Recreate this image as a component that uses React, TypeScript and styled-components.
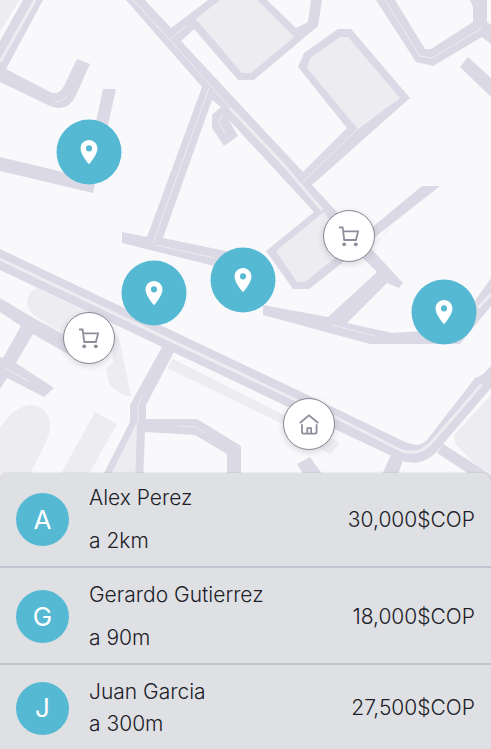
import React from "react";
import styled, { createGlobalStyle } from "styled-components";

const MAP_WIDTH = 491;
const MAP_HEIGHT = 481;

const GlobalStyle = createGlobalStyle`
  *, *::before, *::after { box-sizing: border-box; }
  body {
    margin: 0;
    background: #dfe0e4;
    color: #202127;
    font-family: Inter, "Liberation Sans", sans-serif;
  }
`;

const Page = styled.main`
  display: flex;
  flex-direction: column;
  min-height: 100vh;
`;

const MapArea = styled.section`
  position: relative;
  width: 100%;
  aspect-ratio: ${MAP_WIDTH} / ${MAP_HEIGHT};
  overflow: hidden;
  background: #f9f9fb;
`;

const MapDrawing = styled.svg`
  display: block;
  width: 100%;
  height: 100%;
`;

const Marker = styled.button<{ $x: number; $y: number }>`
  position: absolute;
  left: ${({ $x }) => ($x / MAP_WIDTH) * 100}%;
  top: ${({ $y }) => ($y / MAP_HEIGHT) * 100}%;
  transform: translate(-50%, -50%);
  display: flex;
  align-items: center;
  justify-content: center;
  padding: 0;
  border-radius: 50%;
  cursor: pointer;
`;

const PersonMarker = styled(Marker)`
  width: 65px;
  height: 65px;
  border: 0;
  background: #55b9d4;
  color: #fff;
`;

const PlaceMarker = styled(Marker)`
  width: 52px;
  height: 52px;
  border: 1px solid #858793;
  background: #fff;
  color: #8d8e9b;
  box-shadow: 0 2px 6px rgba(40, 40, 60, 0.16);
`;

const Sheet = styled.ul`
  position: relative;
  flex: 1;
  margin: -8px 0 0;
  padding: 0;
  list-style: none;
  border-radius: 8px 8px 0 0;
  background: #dfe0e4;
  box-shadow: 0 0 2px rgba(60, 60, 80, 0.25);
`;

const Row = styled.li`
  display: flex;
  align-items: center;
  gap: 20px;
  padding: 11px 16px 9px;
  border-bottom: 2px solid #c1c4ce;

  &:first-child { padding-top: 9px; }
  &:last-child { border-bottom: 0; }
`;

const Avatar = styled.span`
  display: flex;
  flex: none;
  align-items: center;
  justify-content: center;
  width: 53px;
  height: 53px;
  border-radius: 50%;
  background: #55b9d4;
  color: #fff;
  font-size: 26px;
  line-height: 32px;
`;

const Details = styled.div<{ $compact?: boolean }>`
  display: flex;
  flex: 1;
  flex-direction: column;
  gap: ${({ $compact }) => ($compact ? 0 : 11)}px;
  min-width: 0;
`;

const Label = styled.span`
  font-size: 21px;
  font-weight: 300;
  line-height: 32px;
`;

const people = [
  { name: "Alex Perez", distance: "a 2km", price: "30,000$COP" },
  { name: "Gerardo Gutierrez", distance: "a 90m", price: "18,000$COP" },
  { name: "Juan Garcia", distance: "a 300m", price: "27,500$COP", compact: true },
];

const pins = [
  { x: 89, y: 152 },
  { x: 154, y: 293 },
  { x: 243, y: 280 },
  { x: 444, y: 312 },
];

const blocks = [
  "M0 0H20L0 31Z",
  "M220 0L196 19L242 73H251L294 37L257 0Z",
  "M340 37H348L400 98L357 130V128L307 68L310 58Z",
  "M324 212L276 251L297 282H305L330 263L360 240Z",
  "M37 288Q27 293 27 303Q28 312 38 318L72 338L100 318Z",
  "M112 330L119 338L131 396H125L110 386L106 368L113 363Z",
  "M0 428Q15 405 32 405Q50 407 50 428Q49 440 30 473V481H0Z",
  "M95 412L117 424L85 481H57Z",
  "M173 359L340 443L330 455L320 448L285 425L167 368Z",
  "M491 395L454 435L455 443L491 481Z",
  "M137 422L135 481H108Z",
];

const roads = [
  "M23 0H43L6 69L50 92Q59 96 64 86L77 59L90 64L76 95Q68 113 50 106L0 82V41Z",
  "M103 89H116L95 184L93 193L0 171V157L84 177Z",
  "M126 0H145L171 28L208 0H220L196 19L242 73H251L294 37L257 0H267L296 28L308 22L311 0H322L318 26L254 80H238L194 29L181 41L303 172L347 128L298 67L304 53L338 29H351L410 98L312 185L338 213L403 283L399 288L387 283L347 323L392 333L455 329L491 278V306L460 344H370L263 315V305L328 317L377 272L345 240L324 212L276 251L297 282H305L340 254L422 186H440L309 289H293L266 251L314 212L228 119L238 136L224 146L212 128V115L221 107L212 100L163 238L245 255L242 273L122 243V232L147 237L202 87Z",
  "M376 0L416 62L433 66L482 37L491 44V25L487 22V0H470L473 7V22L431 49H425L395 0Z",
  "M468 57L460 67L491 97V78Z",
  "M0 249L310 396L403 441Q419 449 427 440L475 378L482 375L491 366V388L443 444Q425 470 400 460L0 270Z",
  "M0 298L37 320L90 348L83 363L33 334L16 363L54 388L44 397L7 378L0 389V357L3 358L21 326L0 312Z",
  "M162 347L130 405V422L100 481H108L137 422L135 481H143L145 432L195 435L227 454V481H241V446L197 419H146V405L175 350Z",
  "M297 464L310 457L327 481H308Z",
  "M391 455L379 481H396L403 460Z",
  "M443 444L473 463L491 476V481H480L437 453Z",
];

const openings = ["M340 37H348L400 98L357 130V128L307 68L310 58Z"];

const wideStripes = [
  "M35 0L0 62",
  "M230 108L282 163L322 210",
  "M0 259L300 402L337 418L402 451Q420 456 432 442L482 384",
  "M491 294L478 308",
];

const thinStripes = [
  "M133 0L181 52L230 108",
  "M171 38L187 26",
  "M209 88L153 243",
  "M155 245L215 258",
  "M223 114L219 121L225 134",
  "M302 183L357 129",
  "M385 0L420 56L432 58L482 28",
  "M332 325L375 336",
  "M5 368L30 382",
  "M46 324L68 337",
  "M138 404V422",
  "M142 395L138 405",
  "M178 426L196 427L205 433",
  "M378 242L389 228",
  "M54 101Q62 103 67 96",
];

function StreetMap() {
  return (
    <MapDrawing viewBox={`0 0 ${MAP_WIDTH} ${MAP_HEIGHT}`} aria-hidden="true">
      <g fill="#edecf1">
        {blocks.map((d) => <path key={d} d={d} />)}
      </g>
      <g fill="#dbd9e5">
        {roads.map((d) => <path key={d} d={d} />)}
      </g>
      <g fill="#edecf1">
        {openings.map((d) => <path key={d} d={d} />)}
      </g>
      <g fill="none" stroke="#edecf1" strokeLinejoin="round">
        <g strokeWidth="3">{wideStripes.map((d) => <path key={d} d={d} />)}</g>
        <g strokeWidth="1">{thinStripes.map((d) => <path key={d} d={d} />)}</g>
      </g>
    </MapDrawing>
  );
}

function PinIcon() {
  return (
    <svg width="29" height="29" viewBox="0 0 24 24" fill="currentColor" aria-hidden="true">
      <path d="M12 2C8.13 2 5 5.13 5 9c0 5.25 7 13 7 13s7-7.75 7-13c0-3.87-3.13-7-7-7zm0 9.5a2.5 2.5 0 0 1 0-5 2.5 2.5 0 0 1 0 5z" />
    </svg>
  );
}

function CartIcon() {
  return (
    <svg width="24" height="24" viewBox="-12 -12 24 24" fill="none" stroke="currentColor" strokeWidth="1.8" aria-hidden="true">
      <path d="M-10 -8.5H-6.4L-4.7 4H6.9L9.1 -4.6H-5.8" />
      <circle cx="-4.8" cy="8.3" r="1.9" fill="currentColor" stroke="none" />
      <circle cx="6.8" cy="8.3" r="1.9" fill="currentColor" stroke="none" />
    </svg>
  );
}

function HouseIcon() {
  return (
    <svg width="24" height="24" viewBox="-12 -12 24 24" fill="none" stroke="currentColor" strokeWidth="1.8" aria-hidden="true">
      <path d="M-9.2 -1L0 -8.7L9.2 -1" />
      <path d="M-7 0.3V8Q-7 9.6 -5.4 9.6H6Q7.6 9.6 7.6 8V0.3" />
      <path d="M-1.7 9.6V4.2H2.1V9.6" />
    </svg>
  );
}

export default function App() {
  return (
    <Page>
      <GlobalStyle />
      <MapArea>
        <StreetMap />
        {pins.map(({ x, y }) => (
          <PersonMarker key={x} type="button" $x={x} $y={y} aria-label="Persona">
            <PinIcon />
          </PersonMarker>
        ))}
        <PlaceMarker type="button" $x={349} $y={236} aria-label="Tienda"><CartIcon /></PlaceMarker>
        <PlaceMarker type="button" $x={89} $y={338} aria-label="Tienda"><CartIcon /></PlaceMarker>
        <PlaceMarker type="button" $x={309} $y={424} aria-label="Casa"><HouseIcon /></PlaceMarker>
      </MapArea>
      <Sheet>
        {people.map(({ name, distance, price, compact }) => (
          <Row key={name}>
            <Avatar aria-hidden="true">{name[0]}</Avatar>
            <Details $compact={compact}>
              <Label>{name}</Label>
              <Label>{distance}</Label>
            </Details>
            <Label>{price}</Label>
          </Row>
        ))}
      </Sheet>
    </Page>
  );
}
